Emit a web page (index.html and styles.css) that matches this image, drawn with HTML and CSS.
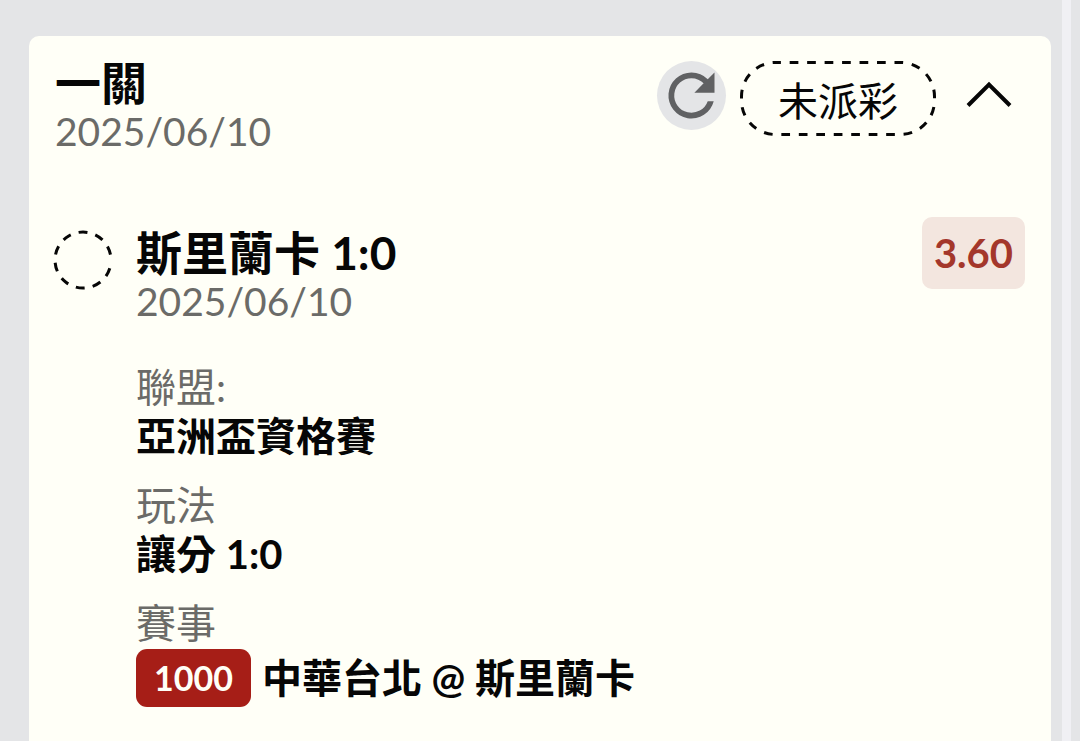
FILE: index.html
```html
<!DOCTYPE html>
<html lang="zh-Hant">
<head>
<meta charset="utf-8">
<meta name="viewport" content="width=device-width, initial-scale=1">
<title>一關</title>
<link rel="stylesheet" href="styles.css">
</head>
<body>
<div class="page">
  <main class="content">
    <article class="card">
      <header class="card-header">
        <div class="heading">
          <h1 class="title">一關</h1>
          <time class="date" datetime="2025-06-10">2025/06/10</time>
        </div>
        <div class="actions">
          <button class="refresh" type="button" aria-label="重新整理">
            <svg class="refresh-icon" viewBox="0 0 24 24" aria-hidden="true"><path d="M17.65 6.35A7.96 7.96 0 0 0 12 4a8 8 0 1 0 7.73 10h-2.08A6 6 0 1 1 12 6c1.66 0 3.14.69 4.22 1.78L13 11h7V4z"/></svg>
          </button>
          <span class="status">
            <svg class="status-outline" viewBox="0 0 196 75" preserveAspectRatio="none" aria-hidden="true"><rect x="1.500" y="1.500" width="193" height="72" rx="34"/></svg>
            未派彩
          </span>
          <button class="toggle" type="button" aria-label="收合" aria-expanded="true">
            <svg class="toggle-icon" viewBox="0 0 48 30" aria-hidden="true"><path d="M3 25.500 24 4.500 45 25.500"/></svg>
          </button>
        </div>
      </header>

      <section class="bet">
        <svg class="bet-mark" viewBox="-28 -28 56 56" aria-hidden="true"><path d="M26.800 8.200A28 28 0 1 1 27.500 -5.300"/></svg>
        <div class="bet-body">
          <h2 class="title">斯里蘭卡 1:0</h2>
          <time class="date" datetime="2025-06-10">2025/06/10</time>
          <dl class="details">
            <div class="detail">
              <dt>聯盟:</dt>
              <dd>亞洲盃資格賽</dd>
            </div>
            <div class="detail">
              <dt>玩法</dt>
              <dd>讓分 1:0</dd>
            </div>
            <div class="detail">
              <dt>賽事</dt>
              <dd class="match"><span class="tag">1000</span><span>中華台北 @ 斯里蘭卡</span></dd>
            </div>
          </dl>
        </div>
        <span class="odds">3.60</span>
      </section>
    </article>
  </main>
  <div class="rail"></div>
</div>
</body>
</html>
```

FILE: styles.css
```css
* {
  box-sizing: border-box;
}

body {
  margin: 0;
  background: #e4e5e7;
  color: #060606;
  font-family: Lato, "Noto Sans CJK TC", sans-serif;
  font-size: 40px;
  line-height: 48px;
}

.page {
  display: flex;
  min-height: 100vh;
  padding-right: 9px;
}

.content {
  flex: 1;
  display: flex;
  padding: 36px 11px 0 29px;
}

.rail {
  width: 9px;
  background: #f0f0f4;
}

.card {
  flex: 1;
  padding: 23px 26px 32px;
  border-radius: 10px 10px 0 0;
  background: #fffff7;
}

.card-header {
  display: flex;
  justify-content: space-between;
  align-items: flex-start;
}

.title {
  margin: 0;
  font-size: 46px;
  line-height: 48px;
  font-weight: 700;
}

.date {
  display: block;
  color: #6b6b68;
  font-size: 39px;
}

.actions {
  display: flex;
  align-items: flex-start;
  padding: 2px 12px 0 0;
}

.refresh {
  width: 69px;
  height: 69px;
  margin-right: 14px;
  padding: 0;
  border: 0;
  border-radius: 50%;
  background: #e4e5e7;
}

.refresh-icon {
  display: block;
  width: 69px;
  height: 69px;
  fill: #606163;
}

.status {
  position: relative;
  padding: 16px 38px 11px;
  margin-right: 29px;
}

.status-outline {
  position: absolute;
  inset: 0;
  width: 100%;
  height: 100%;
  fill: none;
  stroke: #060606;
  stroke-width: 3;
  stroke-dasharray: 8.7 8.77;
  stroke-dashoffset: 3.3;
}

.toggle {
  padding: 19px 0;
  border: 0;
  background: none;
}

.toggle-icon {
  display: block;
  width: 48px;
  height: 30px;
  fill: none;
  stroke: #060606;
  stroke-width: 4;
}

.bet {
  display: flex;
  align-items: flex-start;
  margin-top: 62px;
}

.bet-mark {
  flex: none;
  width: 56px;
  height: 56px;
  margin: 15px 25px 0 0;
  overflow: visible;
  fill: none;
  stroke: #060606;
  stroke-width: 3;
  stroke-dasharray: 8.8 8.2;
}

.bet-body {
  flex: 1;
  padding-top: 12px;
}

.odds {
  padding: 12px;
  border-radius: 10px;
  background: #f3e6df;
  color: #a4372b;
  font-weight: 700;
}

.details {
  display: grid;
  gap: 20px;
  margin: 38px 0 0;
  line-height: 49px;
}

.detail dt {
  color: #6b6b68;
}

.detail dd {
  margin: 0;
  font-weight: 700;
}

.detail .match {
  display: flex;
  align-items: center;
  gap: 11px;
  padding-top: 1px;
}

.tag {
  padding: 5px 18px;
  border-radius: 11px;
  background: #a61e17;
  color: #fffff7;
  font-size: 34px;
  line-height: 48px;
}
```
